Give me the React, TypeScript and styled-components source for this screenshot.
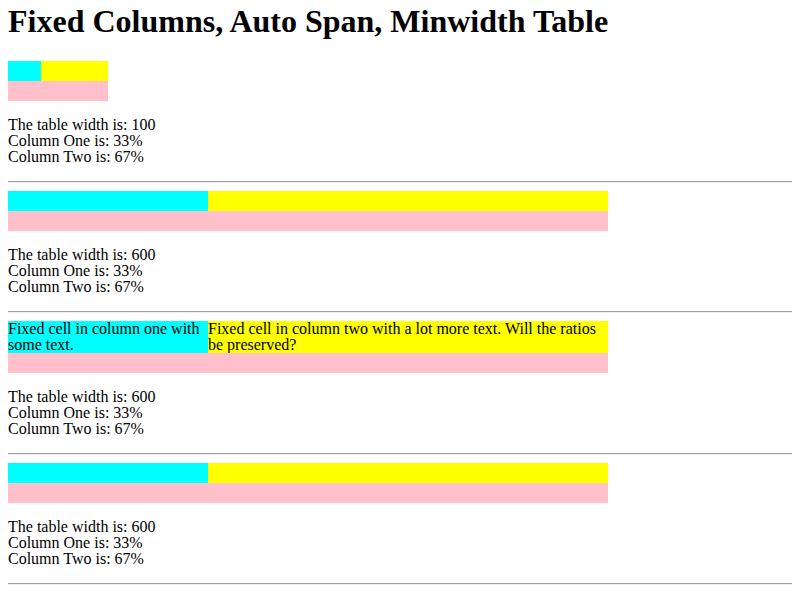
import React from 'react';
import styled, { createGlobalStyle } from 'styled-components';

const GlobalStyle = createGlobalStyle`
  html, body {
    margin: 0;
    background: #fff;
  }
  body {
    padding: 3px 8px 0;
    font-family: "Liberation Serif", "Times New Roman", serif;
    font-size: 16px;
    color: #000;
  }
`;

const Title = styled.h1`
  margin: 0 0 21px;
  font-size: 32px;
  line-height: 37px;
  font-weight: bold;
`;

const ColTable = styled.div<{ $one: number; $two: number }>`
  display: grid;
  grid-template-columns: ${p => p.$one}px ${p => p.$two}px;
  width: ${p => p.$one + p.$two}px;
  line-height: 16px;
`;

const Cell = styled.div<{ $bg: string }>`
  min-height: 20px;
  background: ${p => p.$bg};
  overflow-wrap: normal;
`;

const SpanRow = styled.div`
  grid-column: 1 / -1;
  height: 20px;
  background: pink;
`;

const Info = styled.p`
  margin: 16px 0;
  line-height: 16px;
`;

const Rule = styled.hr`
  margin: 8px 0;
  height: 0;
  border: none;
  border-top: 1px solid #a0a0a0;
  border-bottom: 1px solid #eeeeee;
`;

interface SectionData {
  one: number;
  two: number;
  width: number;
  textOne?: string;
  textTwo?: string;
}

const sections: SectionData[] = [
  { one: 33, two: 67, width: 100 },
  { one: 200, two: 400, width: 600 },
  {
    one: 200,
    two: 400,
    width: 600,
    textOne: 'Fixed cell in column one with some text.',
    textTwo: 'Fixed cell in column two with a lot more text. Will the ratios be preserved?',
  },
  { one: 200, two: 400, width: 600 },
];

export default function App() {
  return (
    <>
      <GlobalStyle />
      <Title>Fixed Columns, Auto Span, Minwidth Table</Title>
      {sections.map((s, i) => (
        <React.Fragment key={i}>
          <ColTable $one={s.one} $two={s.two}>
            <Cell $bg="aqua">{s.textOne}</Cell>
            <Cell $bg="yellow">{s.textTwo}</Cell>
            <SpanRow />
          </ColTable>
          <Info>
            The table width is: {s.width}
            <br />
            Column One is: 33%
            <br />
            Column Two is: 67%
          </Info>
          <Rule />
        </React.Fragment>
      ))}
    </>
  );
}
